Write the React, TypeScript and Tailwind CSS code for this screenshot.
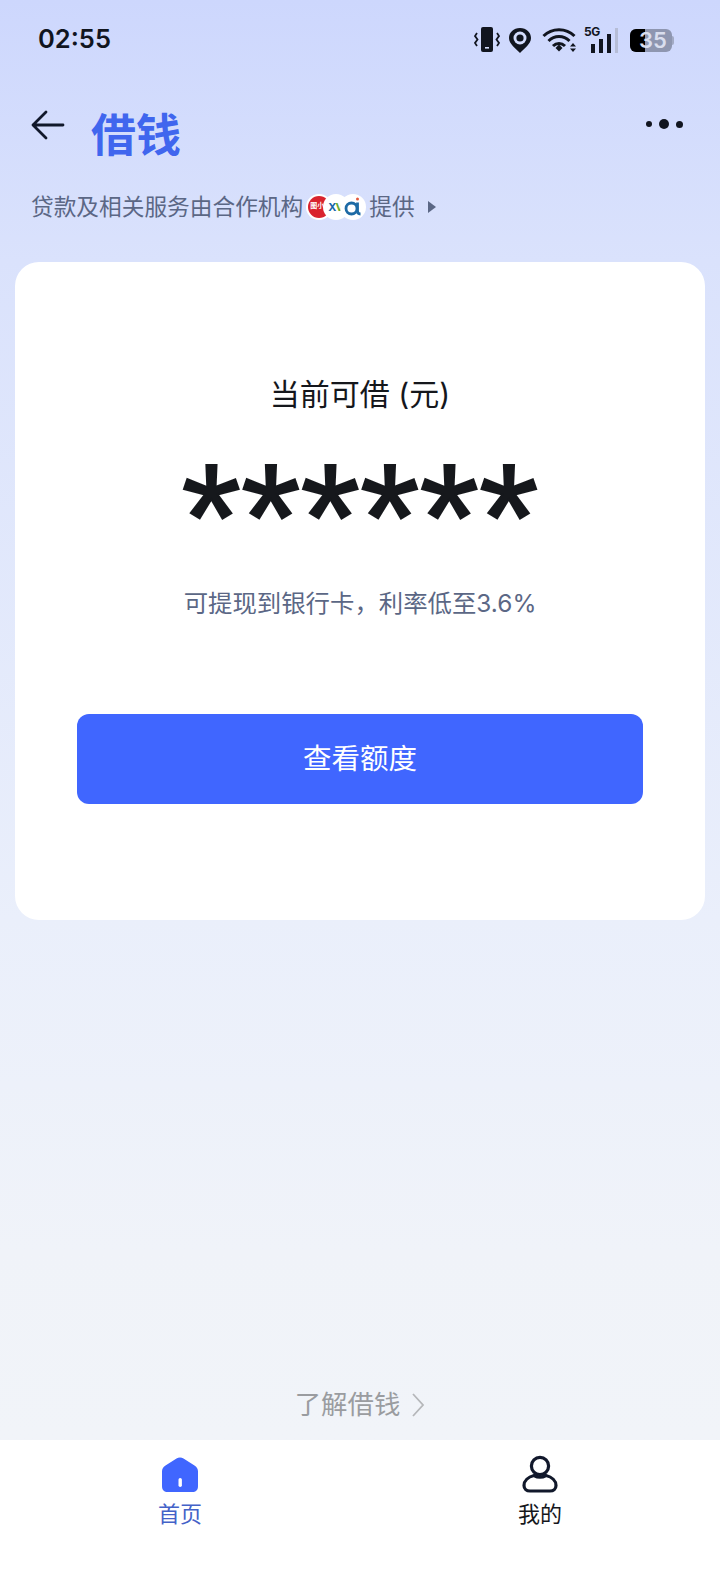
const font = "font-['Inter','Noto_Sans_CJK_SC',sans-serif]";

function StatusIcons() {
  return (
    <div className="flex items-center mt-[2px] ml-[2px]">
      {/* vibrate */}
      <svg width="26" height="28" viewBox="0 0 26 28" className="text-[#11151f]">
        <rect x="7" y="1" width="12" height="25" rx="2" fill="currentColor" />
        <rect x="11" y="21" width="4" height="1.6" fill="#d3dcfc" />
        <path d="M3 7 L1 10 L3.5 13.5 L1 17 L3 20 M23 7 L25 10 L22.5 13.5 L25 17 L23 20" fill="none" stroke="currentColor" strokeWidth="1.8" />
      </svg>
      {/* location */}
      <svg width="24" height="26" viewBox="0 0 24 26" className="ml-[8px]">
        <path d="M12 1 C5.5 1 1 5.5 1 11 C1 17 7.5 21 12 26 C16.5 21 23 17 23 11 C23 5.5 18.5 1 12 1 Z" fill="#11151f" />
        <circle cx="12" cy="11" r="6.5" fill="#d3dcfc" />
        <circle cx="12" cy="11" r="3.6" fill="#11151f" />
      </svg>
      {/* wifi */}
      <svg width="36" height="26" viewBox="0 0 36 26" className="ml-[10px]" fill="none" stroke="#11151f" strokeWidth="3">
        <path d="M1.5 9 C10 0.5 24 0.5 32.5 9" />
        <path d="M6.5 14 C12.5 8 21.5 8 27.5 14" />
        <path d="M11 19 C14.5 15.5 19.5 15.5 23 19" />
        <path d="M13.5 21 L17 17.5 L20.5 21 L17 24.5 Z" fill="#11151f" stroke="none" />
        <path d="M28 19.5 L31 16 L34 19.5 Z M28 21.5 L31 25 L34 21.5 Z" fill="#11151f" stroke="none" />
      </svg>
      {/* 5G signal */}
      <div className="relative ml-[6px] w-[34px] h-[26px] flex items-end justify-end gap-[4px]">
        <span className="absolute left-0 top-[-2px] text-[12px] leading-[14px] font-bold tracking-[-0.5px] text-[#11151f]">5G</span>
        <span className="w-[4px] h-[9px] bg-[#11151f]" />
        <span className="w-[4px] h-[14px] bg-[#11151f]" />
        <span className="w-[4px] h-[19px] bg-[#11151f]" />
        <span className="w-[3px] h-[25px] bg-[#b6bdd6]" />
      </div>
      {/* battery */}
      <div className="relative ml-[12px] flex items-center">
        <div className="relative w-[42px] h-[23px] rounded-[6px] bg-[#8e96b0] overflow-hidden">
          <div className="w-[15px] h-full bg-black" />
        </div>
        <div className="w-[2px] h-[9px] rounded-r-[2px] bg-[#a2aac4]" />
        <span className="absolute left-[9px] top-0 text-[22px] leading-[23px] font-semibold text-[#d9deee]">35</span>
      </div>
    </div>
  );
}

function PartnerLogos() {
  return (
    <div className="flex items-center ml-[3px] mr-[3px]">
      <div className="relative z-[1] w-[26px] h-[26px] rounded-full bg-white overflow-hidden flex items-center justify-start">
        <div className="ml-[2px] w-[22px] h-[22px] rounded-full bg-[#d9232e] flex items-start pt-[6px] pl-[2px] text-[7px] leading-none font-bold text-white">图小</div>
      </div>
      <div className="relative z-[2] -ml-[9px] w-[26px] h-[26px] rounded-full bg-white flex items-center pl-[5px] text-[11px] leading-none font-bold tracking-[-1px]">
        <span className="text-[#1565a8]">X</span>
        <span className="text-[#6aa92c]">V</span>
      </div>
      <div className="relative z-[3] -ml-[9px] w-[26px] h-[26px] rounded-full bg-white flex items-center justify-center">
        <svg width="20" height="20" viewBox="0 0 20 20" fill="none">
          <circle cx="8.5" cy="11.5" r="5.5" stroke="#1d6aa5" strokeWidth="2.8" />
          <path d="M14.5 5.5 V14 Q14.5 17 17.5 17" stroke="#1d6aa5" strokeWidth="2.8" />
          <circle cx="14.5" cy="2" r="1.5" fill="#e2583e" />
        </svg>
      </div>
    </div>
  );
}

export default function App() {
  return (
    <div className={`${font} w-[720px] h-[1584px] flex flex-col overflow-hidden bg-[linear-gradient(180deg,#cdd7fd_0%,#dae2fc_260px,#eaeffb_920px,#f0f3f9_1250px,#f1f4f9_1440px)]`}>
      {/* status bar */}
      <div className="h-[78px] pl-[38px] pr-[46px] flex items-center justify-between">
        <span className="text-[25.5px] font-semibold text-[#11151f]">02:55</span>
        <StatusIcons />
      </div>

      {/* header */}
      <div className="h-[82px] pl-[31px] pr-[37px] flex items-start">
        <svg width="34" height="30" viewBox="0 0 34 30" fill="none" stroke="#11182b" strokeWidth="2.8" strokeLinecap="round" strokeLinejoin="round" className="mt-[32px]">
          <path d="M32 15 H2 M15 2 L2 15 L15 28" />
        </svg>
        <h1 className="ml-[26px] mt-[33px] text-[45px] leading-[50px] font-bold text-[#4066ee]">借钱</h1>
        <div className="ml-auto mt-[41px] flex items-center gap-[7px]">
          <span className="w-[6px] h-[6px] rounded-full bg-[#11151f]" />
          <span className="w-[10px] h-[10px] rounded-full bg-[#11151f]" />
          <span className="w-[7px] h-[7px] rounded-full bg-[#11151f]" />
        </div>
      </div>

      {/* partners line */}
      <div className="mt-[31px] h-[32px] pl-[31px] flex items-center text-[22.7px] text-[#5b6785]">
        <span>贷款及相关服务由合作机构</span>
        <PartnerLogos />
        <span>提供</span>
        <span className="ml-[13px] w-0 h-0 border-y-[6px] border-y-transparent border-l-[8px] border-l-[#5b6785]" />
      </div>

      {/* card */}
      <div className="mt-[39px] mx-[15px] h-[658px] rounded-[24px] bg-white flex flex-col items-center">
        <div className="mt-[112px] text-[30px] leading-[40px] text-[#15171c]">当前可借 (元)</div>
        <div className="mt-[55px] h-[96px] text-[153px] leading-[96px] font-normal font-['Liberation_Sans',sans-serif] text-[#16181c] [-webkit-text-stroke:2px_#16181c]">******</div>
        <div className="mt-[21px] text-[24.4px] leading-[34px] text-[#5b6785]">可提现到银行卡，利率低至3.6%</div>
        <button className="mt-[94px] w-[566px] h-[90px] rounded-[12px] bg-[#4066ff] text-[28.5px] text-white">查看额度</button>
      </div>

      {/* learn more */}
      <div className="mt-auto h-[70px] flex items-center justify-center text-[26.4px] text-[#9a9ca0]">
        <span>了解借钱</span>
        <svg width="14" height="26" viewBox="0 0 14 26" fill="none" stroke="#b5b7ba" strokeWidth="1.8" className="ml-[11px]">
          <path d="M2 2 L12 13 L2 24" />
        </svg>
      </div>

      {/* tab bar */}
      <div className="h-[144px] bg-white grid grid-cols-2">
        <div className="flex flex-col items-center pt-[16px]">
          <svg width="38" height="38" viewBox="0 0 38 38">
            <path d="M15.5 2.5 C17.5 1 20.5 1 22.5 2.5 L33.5 9.5 C36 11 37 13 37 15.5 V30 C37 34 35 36 31 36 H7 C3 36 1 34 1 30 V15.5 C1 13 2 11 4.5 9.5 Z" fill="#4066ff" />
            <rect x="17.5" y="22" width="3.4" height="9" rx="1.7" fill="white" />
          </svg>
          <span className="mt-[4px] text-[22px] leading-[32px] text-[#4462c8]">首页</span>
        </div>
        <div className="flex flex-col items-center pt-[15px]">
          <svg width="36" height="38" viewBox="0 0 36 38" fill="none" stroke="#11182b" strokeWidth="3.2">
            <circle cx="18" cy="11" r="8.6" />
            <path d="M12 20.5 C6 22 2 26 2 30.5 C2 34 4.5 36 8 36 H28 C31.5 36 34 34 34 30.5 C34 26 30 22 24 20.5 C20.5 22.5 15.5 22.5 12 20.5 Z" />
          </svg>
          <span className="mt-[5px] text-[22px] leading-[32px] text-[#15171c]">我的</span>
        </div>
      </div>
    </div>
  );
}
